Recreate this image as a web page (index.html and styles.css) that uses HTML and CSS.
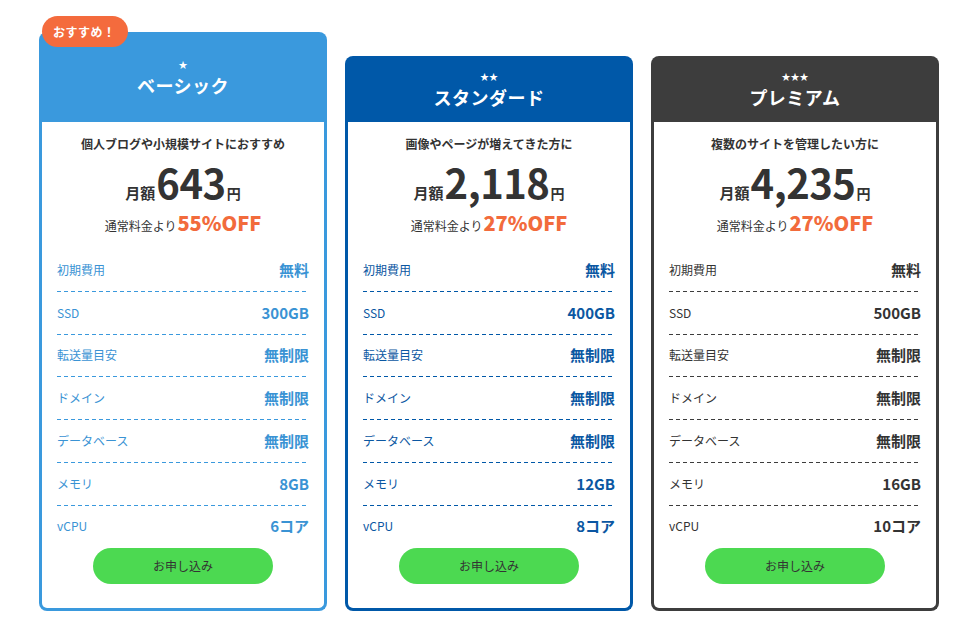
FILE: index.html
```html
<!DOCTYPE html>
<html lang="ja">
<head>
<meta charset="utf-8">
<title>料金プラン</title>
<link rel="stylesheet" href="styles.css">
</head>
<body>
<main class="plans">
  <section class="plan plan--basic plan--featured">
    <span class="badge">おすすめ！</span>
    <header class="plan__head">
      <span class="plan__stars">★</span>
      <h2 class="plan__name">ベーシック</h2>
    </header>
    <div class="plan__body">
      <p class="plan__lead">個人ブログや小規模サイトにおすすめ</p>
      <p class="price"><span class="price__pre">月額</span><span class="price__num">643</span><span class="price__unit">円</span></p>
      <p class="discount">通常料金より<span class="discount__val">55%OFF</span></p>
      <ul class="specs">
        <li class="spec"><span class="spec__label">初期費用</span><span class="spec__value">無料</span></li>
        <li class="spec"><span class="spec__label">SSD</span><span class="spec__value">300GB</span></li>
        <li class="spec"><span class="spec__label">転送量目安</span><span class="spec__value">無制限</span></li>
        <li class="spec"><span class="spec__label">ドメイン</span><span class="spec__value">無制限</span></li>
        <li class="spec"><span class="spec__label">データベース</span><span class="spec__value">無制限</span></li>
        <li class="spec"><span class="spec__label">メモリ</span><span class="spec__value">8GB</span></li>
        <li class="spec"><span class="spec__label">vCPU</span><span class="spec__value">6コア</span></li>
      </ul>
      <a class="apply" href="#">お申し込み</a>
    </div>
  </section>

  <section class="plan plan--standard">
    <header class="plan__head">
      <span class="plan__stars">★★</span>
      <h2 class="plan__name">スタンダード</h2>
    </header>
    <div class="plan__body">
      <p class="plan__lead">画像やページが増えてきた方に</p>
      <p class="price"><span class="price__pre">月額</span><span class="price__num">2,118</span><span class="price__unit">円</span></p>
      <p class="discount">通常料金より<span class="discount__val">27%OFF</span></p>
      <ul class="specs">
        <li class="spec"><span class="spec__label">初期費用</span><span class="spec__value">無料</span></li>
        <li class="spec"><span class="spec__label">SSD</span><span class="spec__value">400GB</span></li>
        <li class="spec"><span class="spec__label">転送量目安</span><span class="spec__value">無制限</span></li>
        <li class="spec"><span class="spec__label">ドメイン</span><span class="spec__value">無制限</span></li>
        <li class="spec"><span class="spec__label">データベース</span><span class="spec__value">無制限</span></li>
        <li class="spec"><span class="spec__label">メモリ</span><span class="spec__value">12GB</span></li>
        <li class="spec"><span class="spec__label">vCPU</span><span class="spec__value">8コア</span></li>
      </ul>
      <a class="apply" href="#">お申し込み</a>
    </div>
  </section>

  <section class="plan plan--premium">
    <header class="plan__head">
      <span class="plan__stars">★★★</span>
      <h2 class="plan__name">プレミアム</h2>
    </header>
    <div class="plan__body">
      <p class="plan__lead">複数のサイトを管理したい方に</p>
      <p class="price"><span class="price__pre">月額</span><span class="price__num">4,235</span><span class="price__unit">円</span></p>
      <p class="discount">通常料金より<span class="discount__val">27%OFF</span></p>
      <ul class="specs">
        <li class="spec"><span class="spec__label">初期費用</span><span class="spec__value">無料</span></li>
        <li class="spec"><span class="spec__label">SSD</span><span class="spec__value">500GB</span></li>
        <li class="spec"><span class="spec__label">転送量目安</span><span class="spec__value">無制限</span></li>
        <li class="spec"><span class="spec__label">ドメイン</span><span class="spec__value">無制限</span></li>
        <li class="spec"><span class="spec__label">データベース</span><span class="spec__value">無制限</span></li>
        <li class="spec"><span class="spec__label">メモリ</span><span class="spec__value">16GB</span></li>
        <li class="spec"><span class="spec__label">vCPU</span><span class="spec__value">10コア</span></li>
      </ul>
      <a class="apply" href="#">お申し込み</a>
    </div>
  </section>
</main>
</body>
</html>
```

FILE: styles.css
```css
* { box-sizing: border-box; }

html, body {
  margin: 0;
  padding: 0;
  background: #ffffff;
}

body {
  font-family: "Noto Sans CJK JP", "Noto Sans", sans-serif;
  color: #333333;
}

.plans {
  display: flex;
  align-items: flex-end;
  gap: 18px;
  padding: 32px 0 0 39px;
}

.plan {
  position: relative;
  width: 288px;
  flex: 0 0 288px;
  display: flex;
  flex-direction: column;
}

.plan--basic { --theme: #3a99dd; --text: #3a93d4; }
.plan--standard { --theme: #0058a8; --text: #0b57a2; }
.plan--premium { --theme: #3d3d3d; --text: #333333; }

.badge {
  position: absolute;
  top: -16px;
  left: 3px;
  height: 31px;
  padding: 0 12px 0 11px;
  border-radius: 16px;
  background: #f46b3d;
  color: #ffffff;
  font-size: 12px;
  font-weight: 700;
  line-height: 31px;
  letter-spacing: 0.5px;
  white-space: nowrap;
}

.plan__head {
  height: 66px;
  background: var(--theme);
  border-radius: 8px 8px 0 0;
  color: #ffffff;
  display: flex;
  flex-direction: column;
  align-items: center;
  justify-content: center;
  padding-top: 2px;
}

.plan--featured .plan__head {
  height: 90px;
}

.plan__stars {
  font-size: 9px;
  line-height: 12px;
  letter-spacing: 0;
}

.plan__name {
  margin: 1px 0 0;
  font-size: 18px;
  font-weight: 700;
  line-height: 26px;
  letter-spacing: 0.5px;
}

.plan__body {
  border: 3px solid var(--theme);
  border-top: none;
  border-radius: 0 0 8px 8px;
  padding: 14px 15px 24px;
  display: flex;
  flex-direction: column;
}

.plan__lead {
  margin: 0;
  text-align: center;
  font-size: 12px;
  font-weight: 700;
  line-height: 16px;
  color: #333333;
}

.price {
  margin: 10px 0 0;
  text-align: center;
  line-height: 40px;
  height: 40px;
  color: #333333;
  font-weight: 700;
  white-space: nowrap;
}

.price__pre {
  font-size: 15px;
  margin-right: 1px;
}

.price__num {
  font-size: 40px;
  letter-spacing: -0.5px;
}

.price__unit {
  font-size: 14px;
  margin-left: 1px;
}

.discount {
  margin: 9px 0 0;
  text-align: center;
  font-size: 12px;
  line-height: 24px;
  color: #333333;
  white-space: nowrap;
}

.discount__val {
  font-size: 20px;
  font-weight: 900;
  color: #f26b3c;
  margin-left: 1px;
}

.specs {
  list-style: none;
  margin: 11px 0 0;
  padding: 0;
  color: var(--text);
}

.spec {
  display: flex;
  justify-content: space-between;
  align-items: center;
  height: 42.8px;
  padding-bottom: 1px;
  background: linear-gradient(to right, var(--theme) 4px, transparent 4px) left bottom / 7px 1px repeat-x;
}

.spec:last-child {
  height: 41px;
  padding-bottom: 0;
  background: none;
}

.spec__label {
  font-size: 12px;
  line-height: 16px;
}

.spec__value {
  font-size: 15px;
  font-weight: 700;
  line-height: 20px;
}

.apply {
  align-self: center;
  margin-top: 1px;
  width: 180px;
  height: 36px;
  border-radius: 18px;
  background: #4cd951;
  color: #333333;
  font-size: 12px;
  line-height: 36px;
  text-align: center;
  text-decoration: none;
}
```
